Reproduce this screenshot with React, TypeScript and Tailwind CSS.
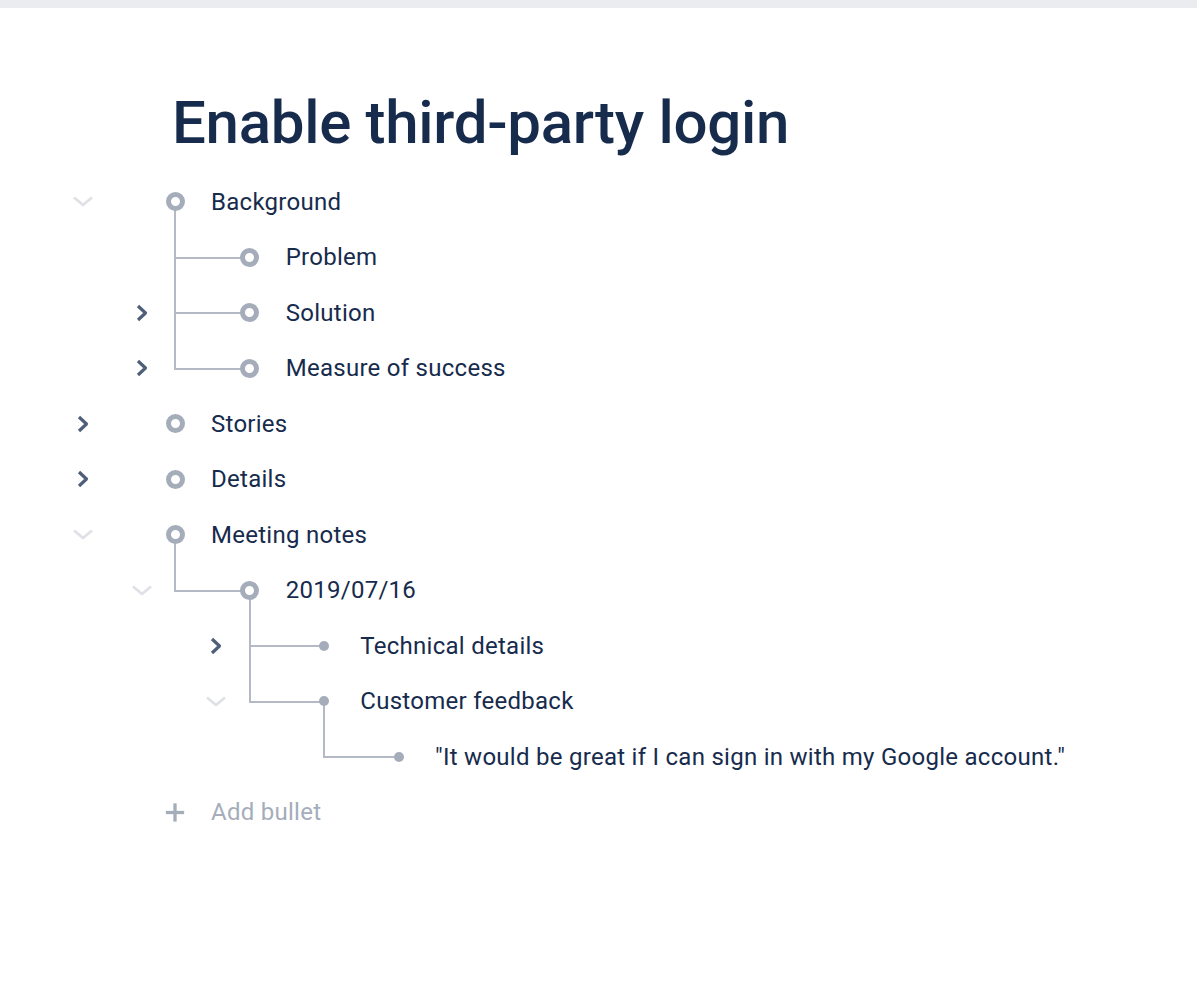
import { Fragment } from 'react';

type Node = {
  label: string;
  level: number;
  bullet: 'ring' | 'dot';
  toggle?: 'open' | 'closed';
};

const rows: Node[] = [
  { label: 'Background', level: 0, bullet: 'ring', toggle: 'open' },
  { label: 'Problem', level: 1, bullet: 'ring' },
  { label: 'Solution', level: 1, bullet: 'ring', toggle: 'closed' },
  { label: 'Measure of success', level: 1, bullet: 'ring', toggle: 'closed' },
  { label: 'Stories', level: 0, bullet: 'ring', toggle: 'closed' },
  { label: 'Details', level: 0, bullet: 'ring', toggle: 'closed' },
  { label: 'Meeting notes', level: 0, bullet: 'ring', toggle: 'open' },
  { label: '2019/07/16', level: 1, bullet: 'ring', toggle: 'open' },
  { label: 'Technical details', level: 2, bullet: 'dot', toggle: 'closed' },
  { label: 'Customer feedback', level: 2, bullet: 'dot', toggle: 'open' },
  { label: '"It would be great if I can sign in with my Google account."', level: 3, bullet: 'dot' },
];

// written out in full so tailwind picks them up
const indent = ['pl-[71px]', 'pl-[130px]', 'pl-[204px]', 'pl-[278px]'];
const bulletGap = ['ml-[70px]', 'ml-[85.7px]', 'ml-[86.3px]', 'ml-[87px]'];
const connectorLeft = ['', 'left-[174px]', 'left-[248.7px]', 'left-[323.3px]'];

function ChevronRight() {
  return (
    <svg width="14" height="20" viewBox="0 0 14 20" fill="none">
      <polyline points="3,3 10.5,10 3,17" stroke="#505f79" strokeWidth="3.2" strokeLinejoin="round" />
    </svg>
  );
}

function ChevronDown() {
  return (
    <svg width="22" height="13" viewBox="0 0 22 13" fill="none">
      <polyline points="2,2.5 11,10 20,2.5" stroke="#dfe1e6" strokeWidth="2.8" strokeLinejoin="round" />
    </svg>
  );
}

function Bullet({ kind }: { kind: 'ring' | 'dot' }) {
  return (
    <div className="relative z-10 flex w-5 h-5 items-center justify-center">
      {kind === 'ring' ? (
        <div className="w-[19px] h-[19px] rounded-full border-[5px] border-[#a5adba] bg-white" />
      ) : (
        <div className="w-[10px] h-[10px] rounded-full bg-[#a5adba]" />
      )}
    </div>
  );
}

export default function App() {
  return (
    <div className="min-h-screen bg-white font-['Roboto','Liberation_Sans',sans-serif] text-[#172b4d]">
      <div className="h-2 mr-[3px] bg-[#ebecf0]" />

      <h1 className="mt-[85px] pl-[172px] text-[60px] leading-none font-medium tracking-[-0.3px]">
        Enable third-party login
      </h1>

      <div className="mt-[21px] flex flex-col">
        {rows.map((row, i) => (
          <div key={i} className={`relative flex h-[55.5px] items-center ${indent[row.level]}`}>
            {row.level > 0 && (
              <div
                className={`absolute top-[-27.75px] h-[56.75px] w-[76px] border-l-2 border-b-2 border-[#b3bac5] ${connectorLeft[row.level]}`}
              />
            )}
            <div className="flex w-6 items-center justify-center">
              {row.toggle === 'closed' && <ChevronRight />}
              {row.toggle === 'open' && <ChevronDown />}
            </div>
            <div className={bulletGap[row.level]}>
              <Bullet kind={row.bullet} />
            </div>
            <span className="ml-[26px] text-[24px] tracking-[0.27px] whitespace-nowrap">{row.label}</span>
          </div>
        ))}

        <div className="flex h-[55.5px] items-center pl-[165px] text-[#a5adba]">
          <div className="flex w-5 h-5 items-center justify-center">
            <svg width="23" height="23" viewBox="0 0 23 23" fill="none">
              <line x1="11.5" y1="1" x2="11.5" y2="22" stroke="#a5adba" strokeWidth="3.8" />
              <line x1="1" y1="11.5" x2="22" y2="11.5" stroke="#a5adba" strokeWidth="3.8" />
            </svg>
          </div>
          <span className="ml-[26px] text-[24px] tracking-[0.27px]">Add bullet</span>
        </div>
      </div>
    </div>
  );
}
